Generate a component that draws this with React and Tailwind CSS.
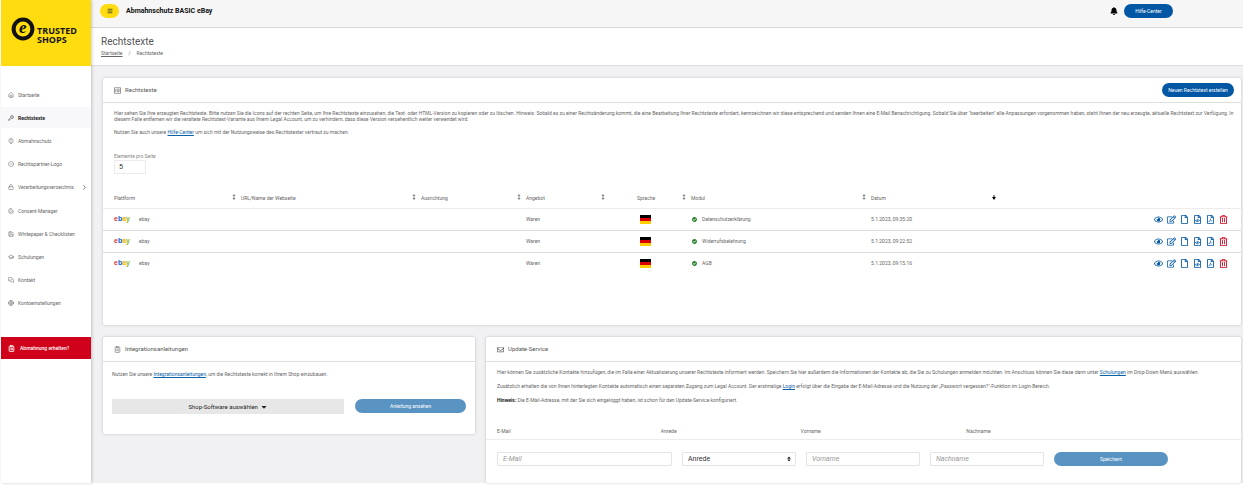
import React, { useState } from 'react';
import {
  FaBell,
  FaCaretDown,
  FaCheckCircle,
  FaRegEdit,
  FaRegEnvelope,
  FaRegEye,
  FaRegFile,
  FaRegFileCode,
  FaRegFilePdf,
  FaRegListAlt,
  FaRegTrashAlt,
  FaSort,
} from 'react-icons/fa';
import {
  ChevronRight,
  CircleCheck,
  ClipboardList,
  Cookie,
  GraduationCap,
  Globe,
  House,
  Lock,
  Menu,
  MessagesSquare,
  Save,
  ShieldHalf,
  Wrench,
} from 'lucide-react';

const navItems = [
  { label: 'Startseite', icon: House },
  { label: 'Rechtstexte', icon: Wrench, active: true },
  { label: 'Abmahnschutz', icon: ShieldHalf },
  { label: 'Rechtspartner-Logo', icon: CircleCheck },
  { label: 'Verarbeitungsverzeichnis', icon: Lock, sub: true },
  { label: 'Consent-Manager', icon: Cookie },
  { label: 'Whitepaper & Checklisten', icon: Save },
  { label: 'Schulungen', icon: GraduationCap },
  { label: 'Kontakt', icon: MessagesSquare },
  { label: 'Kontoeinstellungen', icon: Globe },
];

const columns = [
  { label: 'Plattform', width: 'w-[133px]' },
  { label: 'URL/Name der Webseite', width: 'w-[180px]' },
  { label: 'Ausrichtung', width: 'w-[105px]' },
  { label: 'Angebot', width: 'w-[84px]' },
  { label: 'Sprache', width: 'w-[81px]', center: true },
  { label: 'Modul', width: 'w-[180px]' },
  { label: 'Datum', width: 'w-[130px]', sorted: true },
];

const rows = [
  { module: 'Datenschutzerklärung', date: '5.1.2023, 09:35:20' },
  { module: 'Widerrufsbelehrung', date: '5.1.2023, 09:22:52' },
  { module: 'AGB', date: '5.1.2023, 09:15:16' },
];

const actions = [
  { label: 'Ansehen', icon: FaRegEye },
  { label: 'Bearbeiten', icon: FaRegEdit },
  { label: 'Text', icon: FaRegFile },
  { label: 'HTML', icon: FaRegFileCode },
  { label: 'PDF', icon: FaRegFilePdf },
  { label: 'Löschen', icon: FaRegTrashAlt, danger: true },
];

const Logo = () => (
  <div className="flex h-[66px] items-center bg-[#ffdc0f] pl-[10px]">
    <svg viewBox="0 0 24 24" className="-mt-2 h-6 w-6 shrink-0" aria-hidden="true">
      <circle cx="12" cy="12" r="11.4" fill="#111" />
      <circle cx="12" cy="12" r="7.4" fill="#ffdc0f" />
      <text
        x="11.8"
        y="16.4"
        textAnchor="middle"
        fontFamily="Liberation Serif, serif"
        fontStyle="italic"
        fontWeight="bold"
        fontSize="17"
        fill="#111"
      >
        e
      </text>
    </svg>
    <div className="mt-1 ml-[2px] font-['Open_Sans',sans-serif] text-[9px] leading-[9px] font-bold text-[#111]">
      <div>TRUSTED</div>
      <div>SHOPS</div>
    </div>
  </div>
);

const Sidebar = () => (
  <aside className="z-10 w-[90px] shrink-0 bg-white shadow-[1px_0_3px_rgba(0,0,0,0.2)]">
    <Logo />
    <nav className="mt-[18px] flex h-[230px] flex-col justify-between">
      {navItems.map(({ label, icon: Icon, active, sub }) => (
        <a
          key={label}
          href="#"
          className={`flex h-[21px] items-center pr-[3px] pl-[7px] ${
            active ? 'bg-[#f8f8fa] font-bold text-[#222]' : 'text-[#666]'
          }`}
        >
          <Icon className="mr-1 h-[6px] w-[6px]" strokeWidth={2} />
          <span className="flex-1 whitespace-nowrap">{label}</span>
          {sub && <ChevronRight className="h-[7px] w-[7px]" strokeWidth={3} />}
        </a>
      ))}
    </nav>
    <a href="#" className="mt-[23px] flex h-[22px] items-center bg-[#d0021b] pl-[7px] font-medium text-white">
      <ClipboardList className="mr-[5px] h-[7px] w-[7px]" strokeWidth={3} />
      Abmahnung erhalten?
    </a>
  </aside>
);

const Card = ({ title, icon: Icon, action, className = '', children }) => (
  <section className={`rounded-[2px] bg-white shadow-[0_0_3px_rgba(0,0,0,0.22)] ${className}`}>
    <div className="flex h-[25px] items-center border-b border-[#dedede] pr-[7px] pl-[11px]">
      <Icon className="mr-1 h-[7px] w-[7px] text-[#666]" />
      <h2 className="flex-1 text-[6px] text-[#555]">{title}</h2>
      {action}
    </div>
    {children}
  </section>
);

const TextLink = ({ children }) => (
  <a href="#" className="text-[#0b62a8] underline">
    {children}
  </a>
);

const EbayLogo = () => (
  <span className="w-[25px] font-['Liberation_Sans',sans-serif] text-[7px] leading-[8px] font-bold">
    <span className="text-[#e53238]">e</span>
    <span className="text-[#0064d2]">b</span>
    <span className="text-[#f5af02]">a</span>
    <span className="text-[#86b817]">y</span>
  </span>
);

const Flag = () => (
  <svg viewBox="0 0 11 9" className="mx-auto h-[9px] w-[11px]" role="img" aria-label="Deutsch">
    <rect width="11" height="3" fill="#000" />
    <rect y="3" width="11" height="3" fill="#d00" />
    <rect y="6" width="11" height="3" fill="#ffce00" />
  </svg>
);

const SortIcon = ({ sorted }) => (
  <svg viewBox="0 0 4 6" className={`mb-[2px] h-[6px] w-1 ${sorted ? 'text-black' : 'text-[#888]'}`} aria-hidden="true">
    {!sorted && <path d="M2 0 L3.6 2 H0.4 Z" fill="currentColor" />}
    <path d="M2 1 V5" stroke="currentColor" strokeWidth="0.9" />
    <path d={sorted ? 'M2 6 L4 3 H0 Z' : 'M2 6 L3.6 4 H0.4 Z'} fill="currentColor" />
  </svg>
);

const LegalTable = () => (
  <table className="mt-[15px] w-full table-fixed border-collapse text-left">
    <thead>
      <tr className="h-[19px] border-b border-[#ececec]">
        {columns.map(({ label, width, center, sorted }, i) => (
          <th key={label} className={`${width} ${i === 0 ? 'pl-[11px]' : 'pl-[5px]'} font-normal`}>
            <button className="flex w-full items-center">
              <span className={`flex-1 whitespace-nowrap ${center ? 'text-center' : 'text-left'}`}>{label}</span>
              <SortIcon sorted={sorted} />
            </button>
          </th>
        ))}
        <th aria-label="Aktionen" />
      </tr>
    </thead>
    <tbody>
      {rows.map((row) => (
        <tr key={row.module} className="h-[22px] border-b border-[#dcdcdc] last:border-0">
          <td className="pl-[11px]">
            <div className="flex items-center">
              <EbayLogo />
              ebay
            </div>
          </td>
          <td />
          <td />
          <td className="pl-[5px]">Waren</td>
          <td>
            <Flag />
          </td>
          <td className="pl-[6px]">
            <div className="flex items-center">
              <FaCheckCircle className="mr-[5px] h-[5px] w-[5px] text-[#1e7d22]" />
              {row.module}
            </div>
          </td>
          <td className="pl-[5px]">{row.date}</td>
          <td className="pr-[13px]">
            <div className="flex justify-end gap-1">
              {actions.map(({ label, icon: Icon, danger }) => (
                <button
                  key={label}
                  aria-label={label}
                  className={`flex w-[9px] justify-center ${danger ? 'text-[#d0021b]' : 'text-[#0257a4]'}`}
                >
                  <Icon className="h-[9px] w-auto shrink-0" />
                </button>
              ))}
            </div>
          </td>
        </tr>
      ))}
    </tbody>
  </table>
);

const inputClass =
  'h-[14px] w-full min-w-0 rounded-[1px] border border-[#e4e4e4] bg-white px-[5px] text-[7px] text-[#333] placeholder:text-[#999] placeholder:italic';

const UpdateForm = () => {
  const [salutation, setSalutation] = useState('Anrede');

  return (
    <form onSubmit={(e) => e.preventDefault()}>
      <div className="mt-[19px] grid h-[18px] grid-cols-[164fr_140fr_166fr_264fr] items-center border-b border-[#ececec] pr-[11px] pl-[11px]">
        <label htmlFor="email">E-Mail</label>
        <label htmlFor="salutation">Anrede</label>
        <label htmlFor="firstname">Vorname</label>
        <label htmlFor="lastname">Nachname</label>
      </div>
      <div className="mt-3 grid grid-cols-[175fr_114fr_114fr_114fr_114fr] gap-[10px] pr-[73px] pb-4 pl-[11px]">
        <input id="email" type="email" placeholder="E-Mail" className={inputClass} />
        <div className="relative">
          <select
            id="salutation"
            value={salutation}
            onChange={(e) => setSalutation(e.target.value)}
            className={`${inputClass} appearance-none`}
          >
            <option>Anrede</option>
            <option>Frau</option>
            <option>Herr</option>
          </select>
          <FaSort className="pointer-events-none absolute top-1 right-1 h-[6px] w-[6px] text-[#222]" />
        </div>
        <input id="firstname" type="text" placeholder="Vorname" className={inputClass} />
        <input id="lastname" type="text" placeholder="Nachname" className={inputClass} />
        <button className="h-[14px] rounded-full bg-[#5993c1] text-white">Speichern</button>
      </div>
    </form>
  );
};

export default function App() {
  const [pageSize, setPageSize] = useState('5');

  return (
    <div className="flex min-h-screen bg-white pr-[6px] pb-[6px] pl-px font-[Roboto,sans-serif] text-[5px] leading-[6px] text-[#666]">
      <Sidebar />
      <div className="flex min-w-0 flex-1 flex-col bg-[#f1f1f3]">
        <header className="flex h-7 items-center border-b border-[#d9d9db] bg-[#f6f6f6] pr-[70px] pb-[6px] pl-[9px]">
          <button aria-label="Menü" className="flex h-[14px] w-[19px] items-center justify-center rounded-full bg-[#ffdc0f] text-[#333]">
            <Menu className="h-[6px] w-[6px]" strokeWidth={3} />
          </button>
          <span className="ml-[7px] flex-1 text-[7px] font-bold text-[#111]">Abmahnschutz BASIC eBay</span>
          <FaBell className="mr-[6px] h-2 w-2 text-black" />
          <button className="h-[14px] w-[49px] rounded-full bg-[#0257a4] text-white">Hilfe-Center</button>
        </header>

        <div className="h-[38px] border-b border-[#dcdcde] bg-white pt-2 pl-[10px]">
          <h1 className="text-[10px] leading-[12px] text-[#555]">Rechtstexte</h1>
          <div className="mt-[2px] flex gap-[6px]">
            <a href="#" className="underline">
              Startseite
            </a>
            <span>/</span>
            <span>Rechtstexte</span>
          </div>
        </div>

        <main className="flex flex-1 flex-col gap-3 pt-3 pr-[2px] pl-3">
          <Card
            title="Rechtstexte"
            icon={FaRegListAlt}
            className="pb-[51px]"
            action={
              <button className="h-[14px] w-[72px] rounded-full bg-[#0257a4] whitespace-nowrap text-white">
                Neuen Rechtstext erstellen
              </button>
            }
          >
            <div className="pt-[7px] pr-1 pl-[11px]">
              <p>
                Hier sehen Sie Ihre erzeugten Rechtstexte. Bitte nutzen Sie die Icons auf der rechten Seite, um Ihre
                Rechtstexte einzusehen, die Text- oder HTML-Version zu kopieren oder zu löschen. Hinweis: Sobald es zu
                einer Rechtsänderung kommt, die eine Bearbeitung Ihrer Rechtstexte erfordert, kennzeichnen wir diese
                entsprechend und senden Ihnen eine E-Mail Benachrichtigung. Sobald Sie über "bearbeiten" alle
                Anpassungen vorgenommen haben, steht Ihnen der neu erzeugte, aktuelle Rechtstext zur Verfügung. In
                <br />
                diesem Falle entfernen wir die veraltete Rechtstext-Variante aus Ihrem Legal Account, um zu verhindern,
                dass diese Version versehentlich weiter verwendet wird.
              </p>
              <p className="mt-[7px]">
                Nutzen Sie auch unsere <TextLink>Hilfe-Center</TextLink> um sich mit der Nutzungsweise des Rechtstexter
                vertraut zu machen.
              </p>
              <label htmlFor="page-size" className="mt-[18px] block text-[#888]">
                Elemente pro Seite
              </label>
              <select
                id="page-size"
                value={pageSize}
                onChange={(e) => setPageSize(e.target.value)}
                className="mt-px block h-[14px] w-8 appearance-none border border-[#ececec] bg-white px-1 text-[7px] text-[#333]"
              >
                <option>5</option>
                <option>10</option>
                <option>25</option>
              </select>
            </div>
            <LegalTable />
          </Card>

          <div className="grid flex-1 grid-cols-[372fr_755fr] gap-[11px]">
            <Card title="Integrationsanleitungen" icon={ClipboardList} className="self-start">
              <div className="px-[9px] pt-[9px] pb-5">
                <p>
                  Nutzen Sie unsere <TextLink>Integrationsanleitungen</TextLink>, um die Rechtstexte korrekt in Ihrem
                  Shop einzubauen.
                </p>
                <div className="mt-[22px] grid grid-cols-[233fr_111fr] items-start gap-[11px]">
                  <button className="flex h-[15px] items-center justify-center gap-[2px] rounded-[1px] bg-[#e7e7e7] text-[6px] text-[#222]">
                    Shop-Software auswählen
                    <FaCaretDown className="h-2 w-2" />
                  </button>
                  <button className="h-[14px] rounded-full bg-[#5993c1] text-white">Anleitung ansehen</button>
                </div>
              </div>
            </Card>

            <Card title="Update-Service" icon={FaRegEnvelope}>
              <div className="flex flex-col gap-2 pt-[7px] pr-1 pl-[11px]">
                <p>
                  Hier können Sie zusätzliche Kontakte hinzufügen, die im Falle einer Aktualisierung unserer Rechtstexte
                  informiert werden. Speichern Sie hier außerdem die Informationen der Kontakte ab, die Sie zu
                  Schulungen anmelden möchten. Im Anschluss können Sie diese dann unter <TextLink>Schulungen</TextLink>{' '}
                  im Drop-Down Menü auswählen.
                </p>
                <p>
                  Zusätzlich erhalten die von Ihnen hinterlegten Kontakte automatisch einen separaten Zugang zum Legal
                  Account. Der erstmalige <TextLink>Login</TextLink> erfolgt über die Eingabe der E-Mail-Adresse und die
                  Nutzung der „Passwort vergessen?"-Funktion im Login-Bereich.
                </p>
                <p>
                  <strong className="text-[#222]">Hinweis:</strong> Die E-Mail-Adresse, mit der Sie sich eingeloggt
                  haben, ist schon für den Update-Service konfiguriert.
                </p>
              </div>
              <UpdateForm />
            </Card>
          </div>
        </main>
      </div>
    </div>
  );
}
